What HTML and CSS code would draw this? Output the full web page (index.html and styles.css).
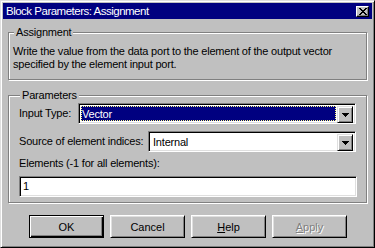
FILE: index.html
```html
<!DOCTYPE html>
<html lang="en">
<head>
<meta charset="UTF-8" />
<meta name="viewport" content="width=device-width, initial-scale=1" />
<title>Block Parameters: Assignment</title>
<link rel="stylesheet" href="styles.css">
</head>
<body>
<div class="window">
  <div class="titlebar">
    <span class="title">Block Parameters: Assignment</span>
    <button class="close" title="Close">
      <svg width="8" height="7" viewBox="0 0 8 7" shape-rendering="crispEdges">
        <path d="M0 0h2v1H0zM6 0h2v1H6zM1 1h2v1H1zM5 1h2v1H5zM2 2h4v1H2zM3 3h2v1H3zM2 4h4v1H2zM1 5h2v1H1zM5 5h2v1H5zM0 6h2v1H0zM6 6h2v1H6z" fill="#000"/>
      </svg>
    </button>
  </div>

  <div class="dialog-body">
    <fieldset class="group group-desc">
      <legend>Assignment</legend>
      <p class="desc">Write the value from the data port to the element of the output vector<br>specified by the element input port.</p>
    </fieldset>

    <fieldset class="group group-params">
      <legend>Parameters</legend>
      <div class="row">
        <label>Input Type:</label>
        <div class="combo combo-wide">
          <span class="combo-value selected"><span class="focus-rect">Vector</span></span>
          <span class="combo-btn">
            <svg width="7" height="4" viewBox="0 0 7 4" shape-rendering="crispEdges"><path d="M0 0h7v1H0zM1 1h5v1H1zM2 2h3v1H2zM3 3h1v1H3z" fill="#000"/></svg>
          </span>
        </div>
      </div>
      <div class="row">
        <label>Source of element indices:</label>
        <div class="combo combo-narrow">
          <span class="combo-value">Internal</span>
          <span class="combo-btn">
            <svg width="7" height="4" viewBox="0 0 7 4" shape-rendering="crispEdges"><path d="M0 0h7v1H0zM1 1h5v1H1zM2 2h3v1H2zM3 3h1v1H3z" fill="#000"/></svg>
          </span>
        </div>
      </div>
      <label class="field-label">Elements (-1 for all elements):</label>
      <div class="textbox">1</div>
    </fieldset>

    <div class="buttons">
      <button class="btn btn-default">OK</button>
      <button class="btn">Cancel</button>
      <button class="btn"><u>H</u>elp</button>
      <button class="btn" disabled><u>A</u>pply</button>
    </div>
  </div>
</div>
</body>
</html>
```

FILE: styles.css
```css
/* Reset */
* {
  box-sizing: border-box;
}
body, html {
  margin: 0; padding: 0;
  background: #c0c0c0;
  font-family: "Liberation Sans", Arial, sans-serif;
  font-size: 11px;
  letter-spacing: -0.2px;
  color: #000;
}

/* window frame */
.window {
  width: 375px;
  height: 248px;
  background: #c0c0c0;
  border: 1px solid;
  border-color: #dfdfdf #000 #000 #dfdfdf;
  box-shadow: inset 1px 1px #fff, inset -1px -1px #808080;
  padding: 2px;
}
.titlebar {
  height: 16px;
  background: #000080;
  color: #fff;
  display: flex;
  align-items: center;
  justify-content: space-between;
  padding: 0 3px 0 3px;
}
.title {
  font-size: 11.5px;
  letter-spacing: -0.5px;
  line-height: 16px;
}
.close {
  width: 13px;
  height: 11px;
  padding: 0;
  margin: 0;
  background: #c0c0c0;
  border: 1px solid;
  border-color: #fff #000 #000 #fff;
  box-shadow: inset -1px -1px #808080;
  display: flex;
  align-items: center;
  justify-content: center;
}

.dialog-body {
  padding: 0 5px;
}

/* etched group boxes */
.group {
  margin: 0;
  border: 1px solid #808080;
  box-shadow: inset 1px 1px #fff, 1px 1px #fff;
  min-width: 0;
}
.group legend {
  padding: 0 2px;
  margin-left: 1px;
  line-height: 13px;
  background: #c0c0c0;
}
.group-desc {
  margin-top: 7px;
  padding: 6px 4px 8px 4px;
}
.desc {
  margin: 0;
  line-height: 13px;
}
.group-params {
  margin-top: 9px;
  padding: 1px 9px 5px 10px;
}

.row {
  display: flex;
  align-items: center;
  justify-content: space-between;
  padding-right: 1px;
  margin-bottom: 7px;
}
.row label {
  line-height: 13px;
  white-space: nowrap;
}

/* combo boxes */
.combo {
  height: 21px;
  display: flex;
  flex-shrink: 0;
  background: #fff;
  border: 1px solid;
  border-color: #808080 #fff #fff #808080;
  box-shadow: inset 1px 1px #000, inset -1px -1px #dfdfdf;
  padding: 2px;
}
.combo-wide {
  width: 278px;
}
.combo-narrow {
  width: 208px;
}
.combo-value {
  flex: 1;
  line-height: 17px;
  padding-left: 2px;
}
.combo-value.selected {
  padding-left: 0;
  padding-right: 1px;
  display: flex;
}
.focus-rect {
  flex: 1;
  background: #000080;
  color: #fff;
  padding-left: 1px;
  line-height: 17px;
  outline: 1px dotted #ffff80;
  outline-offset: -1px;
}
.combo-btn {
  width: 16px;
  height: 17px;
  background: #c0c0c0;
  border: 1px solid;
  border-color: #dfdfdf #000 #000 #dfdfdf;
  box-shadow: inset 1px 1px #fff, inset -1px -1px #808080;
  display: flex;
  align-items: center;
  justify-content: center;
}

.field-label {
  display: block;
  line-height: 13px;
  margin-top: -2px;
  margin-bottom: 6px;
}
.textbox {
  height: 21px;
  background: #fff;
  border: 1px solid;
  border-color: #808080 #fff #fff #808080;
  box-shadow: inset 1px 1px #000, inset -1px -1px #dfdfdf;
  padding: 0 3px;
  line-height: 19px;
}

/* push buttons */
.buttons {
  display: flex;
  gap: 6px;
  margin-top: 12px;
  padding-left: 21px;
}
.btn {
  width: 75px;
  height: 23px;
  padding: 0;
  font-family: inherit;
  font-size: 11px;
  letter-spacing: 0;
  color: #000;
  background: #c0c0c0;
  border: 1px solid;
  border-color: #fff #000 #000 #fff;
  box-shadow: inset 1px 1px #dfdfdf, inset -1px -1px #808080;
}
.btn-default {
  border-color: #000;
  box-shadow: inset 1px 1px #fff, inset -1px -1px #000, inset -2px -2px #808080;
}
.btn:disabled {
  color: #808080;
  text-shadow: 1px 1px #fff;
}
```
